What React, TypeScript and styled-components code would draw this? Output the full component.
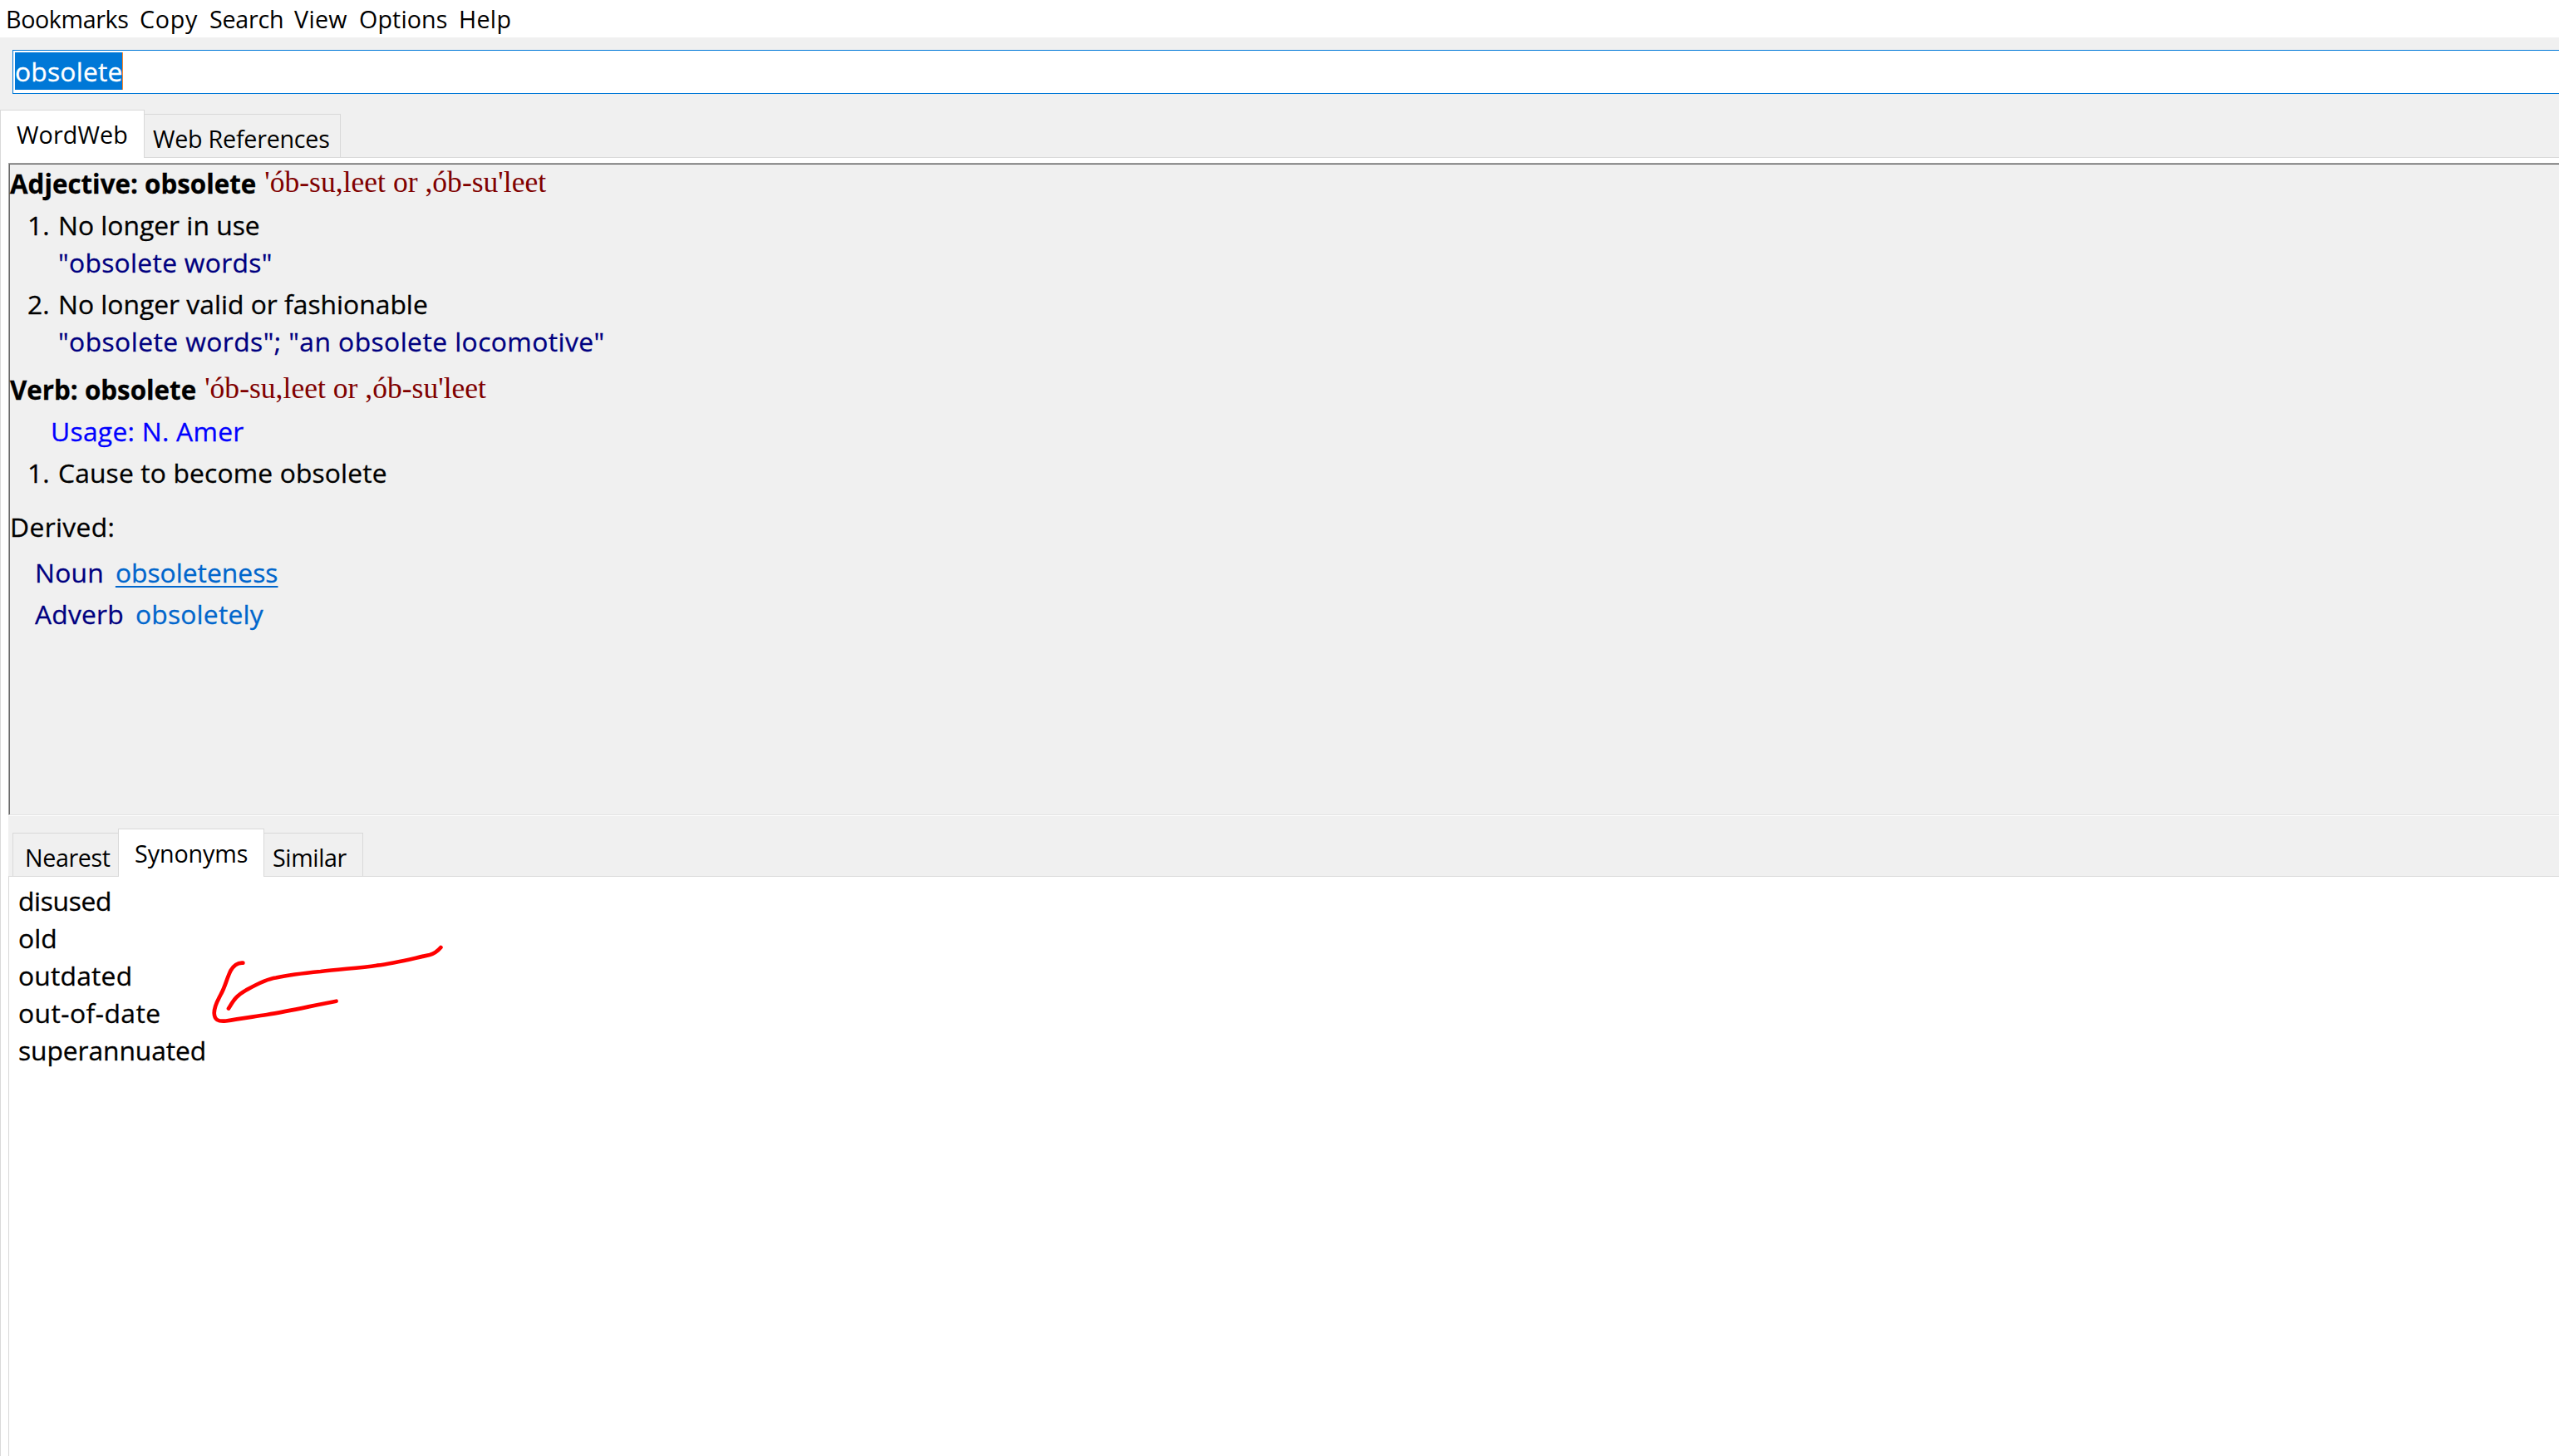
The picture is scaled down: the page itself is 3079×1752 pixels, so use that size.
import React from "react";
import styled, { createGlobalStyle } from "styled-components";

type Label = {
  text: string;
  width: number;
  spacing?: number;
};

type TabItem = Label & {
  inset: number;
  active?: boolean;
};

const menuItems: Label[] = [
  { text: "Bookmarks", width: 161, spacing: -0.4 },
  { text: "Copy", width: 84, spacing: 0.7 },
  { text: "Search", width: 102, spacing: -0.25 },
  { text: "View", width: 78, spacing: 0.3 },
  { text: "Options", width: 120, spacing: 0.1 },
  { text: "Help", width: 80, spacing: 0.3 },
];

const sourceTabs: TabItem[] = [
  { text: "WordWeb", width: 174, inset: 19, spacing: 0.1, active: true },
  { text: "Web References", width: 236, inset: 10, spacing: -0.25 },
];

const relatedTabs: TabItem[] = [
  { text: "Nearest", width: 127, inset: 14, spacing: -0.4 },
  { text: "Synonyms", width: 176, inset: 19, spacing: -0.1, active: true },
  { text: "Similar", width: 119, inset: 10, spacing: -0.4 },
];

const synonyms = [
  { text: "disused", spacing: -0.35 },
  { text: "old", spacing: 0.1 },
  { text: "outdated", spacing: 0.2 },
  { text: "out-of-date", spacing: 0.45 },
  { text: "superannuated", spacing: -0.1 },
];

const pronunciation = "'ób-su,leet or ,ób-su'leet";

function Tabs({ items }: { items: TabItem[] }) {
  return (
    <>
      {items.map((tab, i) => (
        <Tab
          key={tab.text}
          $width={tab.width}
          $inset={tab.inset}
          $spacing={tab.spacing}
          $active={tab.active}
          $first={i === 0}
        >
          {tab.text}
        </Tab>
      ))}
    </>
  );
}

function App() {
  return (
    <Container>
      <GlobalStyle />
      <MenuBar>
        {menuItems.map((item) => (
          <MenuItem key={item.text} $width={item.width} $spacing={item.spacing}>
            {item.text}
          </MenuItem>
        ))}
      </MenuBar>

      <SearchRow>
        <SearchBox>
          <SelectedText>obsolete</SelectedText>
        </SearchBox>
      </SearchRow>

      <TabStrip>
        <Tabs items={sourceTabs} />
      </TabStrip>

      <Body>
        <Definition>
          <Heading>
            Adjective: obsolete
            <Pronunciation>{pronunciation}</Pronunciation>
          </Heading>
          <Sense>
            <SenseNumber>1.</SenseNumber>
            No longer in use
          </Sense>
          <Example $spacing={0.3}>"obsolete words"</Example>
          <Sense>
            <SenseNumber>2.</SenseNumber>
            No longer valid or fashionable
          </Sense>
          <Example $spacing={0.43}>
            "obsolete words"; "an obsolete locomotive"
          </Example>

          <Heading $gap={13}>
            Verb: obsolete
            <Pronunciation>{pronunciation}</Pronunciation>
          </Heading>
          <Usage>Usage: N. Amer</Usage>
          <Sense $spacing={0.14}>
            <SenseNumber>1.</SenseNumber>
            Cause to become obsolete
          </Sense>

          <DerivedTitle>Derived:</DerivedTitle>
          <Derived $gap={10}>
            Noun<WordLink $underlined>obsoleteness</WordLink>
          </Derived>
          <Derived $gap={5}>
            Adverb<WordLink $spacing={0.2}>obsoletely</WordLink>
          </Derived>
        </Definition>

        <Related>
          <TabStrip $inset={5}>
            <Tabs items={relatedTabs} />
          </TabStrip>
          <WordList>
            {synonyms.map((word) => (
              <Word key={word.text} $spacing={word.spacing}>
                {word.text}
              </Word>
            ))}
            <Arrow viewBox="250 1130 290 110">
              <path d="M530.4 1140 C527 1144 524 1147 517 1149 C498 1153 476 1159 453.6 1161.7 C432 1165 409 1166 385.7 1169 C365 1171 348 1173 332 1176.5 C320 1178 306 1186 296 1191.5 C283 1199 281 1204 275 1213.5" />
              <path d="M292.4 1158.7 C285 1158 281 1162 277.5 1168 C273 1177 271 1187 266 1196 C262 1204 257.7 1210 257.7 1219 C258 1227 262 1229.5 272 1228.5 C288 1225.5 305 1223.5 321 1221 C350 1216.5 376 1210 404.6 1204.7" />
            </Arrow>
          </WordList>
        </Related>
      </Body>
    </Container>
  );
}

export default App;

const GlobalStyle = createGlobalStyle`
  body {
    margin: 0;
    background: #f0f0f0;
  }

  * {
    box-sizing: border-box;
  }
`;

const Container = styled.div`
  display: flex;
  flex-direction: column;
  height: 100vh;
  overflow: hidden;
  background: #f0f0f0;
  color: #000;
  font-family: "Open Sans", "Noto Sans", sans-serif;
  font-size: 31.8px;
  line-height: 45px;
  white-space: nowrap;
`;

const MenuBar = styled.div`
  display: flex;
  flex: none;
  height: 45px;
  padding-left: 7px;
  background: #fff;
  font-size: 28.7px;
`;

const MenuItem = styled.div<{ $width: number; $spacing?: number }>`
  width: ${(props) => props.$width}px;
  letter-spacing: ${(props) => props.$spacing || 0}px;
`;

const SearchRow = styled.div`
  flex: none;
  padding: 15px 0 19px 15px;
`;

const SearchBox = styled.div`
  display: flex;
  height: 53px;
  padding: 2px;
  border: 1px solid #0078d7;
  border-right: none;
  background: #fff;
`;

const SelectedText = styled.span`
  width: 130px;
  height: 45px;
  border-right: 1px solid #ff8728;
  background: #0078d7;
  color: #fff;
  letter-spacing: 0.2px;
  -webkit-text-stroke: 0.3px;
`;

const TabStrip = styled.div<{ $inset?: number }>`
  display: flex;
  flex: none;
  align-items: flex-end;
  height: 58px;
  padding-left: ${(props) => props.$inset || 0}px;
  box-shadow: inset 0 -1px #d9d9d9;
`;

const Tab = styled.div<{
  $width: number;
  $inset: number;
  $spacing?: number;
  $active?: boolean;
  $first: boolean;
}>`
  width: ${(props) => props.$width}px;
  height: ${(props) => (props.$active ? 58 : 53)}px;
  padding-top: 8px;
  padding-left: ${(props) => props.$inset}px;
  border: 1px solid #d9d9d9;
  ${(props) => !props.$active && !props.$first && "border-left: none;"}
  ${(props) => !props.$active && props.$first && "border-right: none;"}
  ${(props) => props.$active && "border-bottom: none;"}
  background: ${(props) => (props.$active ? "#fff" : "#f0f0f0")};
  font-size: 28.7px;
  line-height: 41px;
  letter-spacing: ${(props) => props.$spacing || 0}px;
`;

const Body = styled.div`
  display: flex;
  flex: 1;
  flex-direction: column;
  padding: 6px 0 0 9px;
  border-left: 1px solid #d9d9d9;
  background: #fff;
`;

const Definition = styled.div`
  flex: none;
  height: 785px;
  margin-bottom: 1px;
  border-top: 1px solid #a0a0a0;
  border-left: 1px solid #a0a0a0;
  border-bottom: 1px solid #e3e3e3;
  padding: 1px 0 0 1px;
  box-shadow: inset 1px 1px #696969;
  background: #f0f0f0;
  -webkit-text-stroke: 0.3px;
`;

const Heading = styled.div<{ $gap?: number }>`
  height: 45px;
  margin-top: ${(props) => props.$gap || 0}px;
  font-size: 31.3px;
  font-weight: bold;
  line-height: 47px;
`;

const Pronunciation = styled.span`
  margin-left: 10px;
  color: #800000;
  font-family: "Liberation Serif", serif;
  font-size: 35.6px;
  font-weight: normal;
  line-height: 1;
  vertical-align: 2px;
  -webkit-text-stroke: 0;
`;

const Sense = styled.div<{ $spacing?: number }>`
  display: flex;
  margin-top: 5px;
  padding-left: 21px;
  letter-spacing: ${(props) => props.$spacing || 0}px;
`;

const SenseNumber = styled.span`
  width: 37px;
`;

const Example = styled.div<{ $spacing: number }>`
  padding-left: 58px;
  color: #000080;
  letter-spacing: ${(props) => props.$spacing}px;
`;

const Usage = styled.div`
  margin-top: 5px;
  padding-left: 49px;
  color: #0000ff;
  letter-spacing: 0.28px;
`;

const DerivedTitle = styled.div`
  margin-top: 20px;
  letter-spacing: 0.35px;
`;

const Derived = styled.div<{ $gap: number }>`
  display: flex;
  gap: 14px;
  margin-top: ${(props) => props.$gap}px;
  padding-left: 30px;
  color: #000080;
  letter-spacing: 0.2px;
`;

const WordLink = styled.a<{ $underlined?: boolean; $spacing?: number }>`
  color: #0066cc;
  letter-spacing: ${(props) => props.$spacing || 0}px;
  text-decoration: ${(props) => (props.$underlined ? "underline" : "none")};
  text-decoration-thickness: 2px;
  text-decoration-skip-ink: none;
  text-underline-offset: 4px;
`;

const Related = styled.div`
  display: flex;
  flex: 1;
  flex-direction: column;
  padding-top: 15px;
  background: #f0f0f0;
`;

const WordList = styled.div`
  position: relative;
  flex: 1;
  padding: 6px 0 0 11px;
  border-left: 1px solid #d9d9d9;
  background: #fff;
  -webkit-text-stroke: 0.3px;
`;

const Word = styled.div<{ $spacing: number }>`
  letter-spacing: ${(props) => props.$spacing}px;
`;

// hand drawn arrow pointing at the list
const Arrow = styled.svg`
  position: absolute;
  top: 75px;
  left: 239px;
  width: 290px;
  height: 110px;
  fill: none;
  stroke: #ff0000;
  stroke-width: 4.7;
  stroke-linecap: round;
  stroke-linejoin: round;
`;
